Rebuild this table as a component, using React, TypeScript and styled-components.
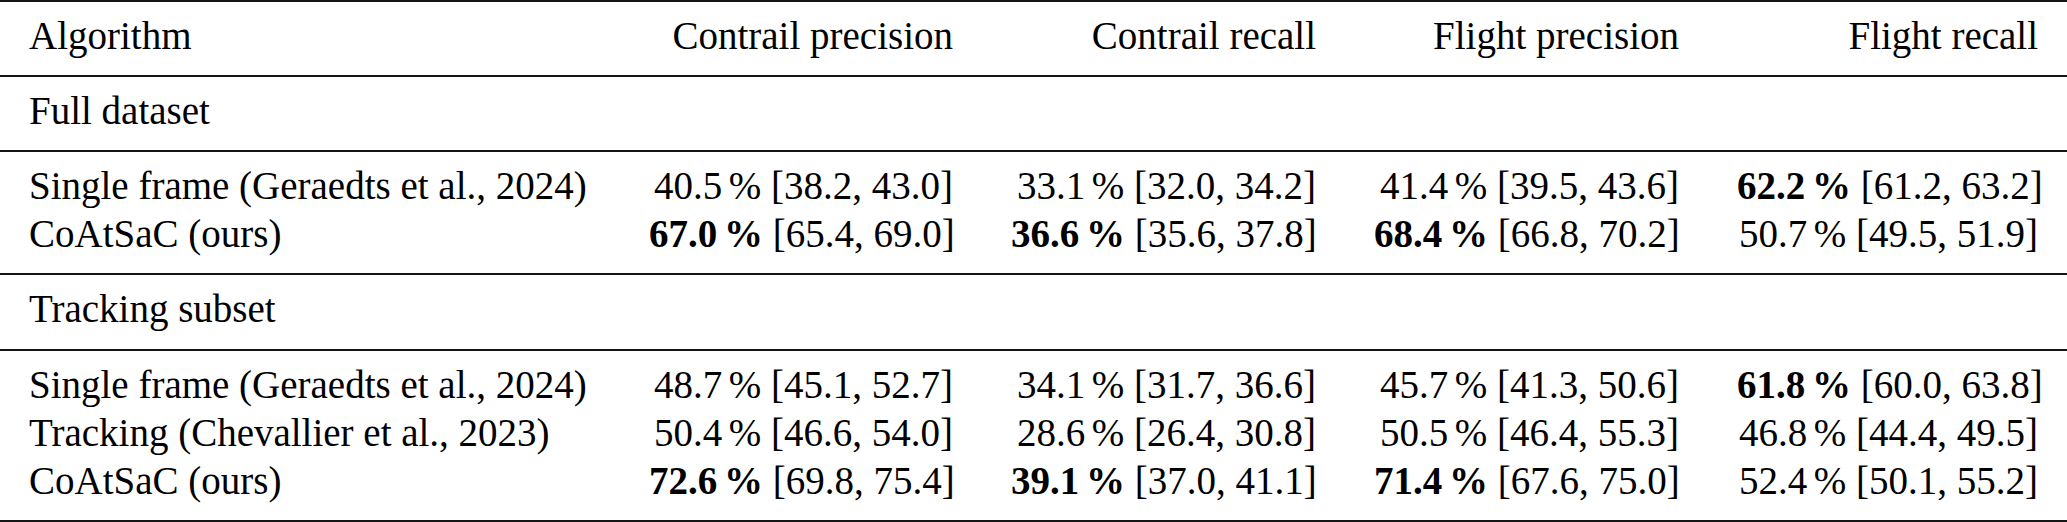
import React from 'react';
import styled, { createGlobalStyle } from 'styled-components';

const GlobalStyle = createGlobalStyle`
  html, body {
    margin: 0;
    padding: 0;
    background: #ffffff;
  }
  body {
    font-family: "Liberation Serif", "Times New Roman", serif;
    color: #000000;
  }
`;

const RULE = '2px solid #151515';

const Table = styled.table`
  width: 2067px;
  table-layout: fixed;
  border-collapse: separate;
  border-spacing: 0;
  font-family: "Liberation Serif", "Times New Roman", serif;
  font-size: 39px;
  line-height: 48px;
  color: #000;
`;

const HeadCell = styled.th<{ $align: 'left' | 'right' }>`
  font-weight: normal;
  text-align: ${(p) => p.$align};
  white-space: nowrap;
  padding: 10px 29px 15px;
  border-top: ${RULE};
`;

const SectionCell = styled.td<{ $padBottom: number }>`
  text-align: left;
  white-space: nowrap;
  padding: 10px 29px ${(p) => p.$padBottom}px;
  border-top: ${RULE};
`;

const DataCell = styled.td<{
  $align: 'left' | 'right';
  $first: boolean;
  $last: boolean;
  $end: boolean;
}>`
  text-align: ${(p) => p.$align};
  white-space: nowrap;
  padding: ${(p) => (p.$first ? '10px' : '0')} 29px ${(p) => (p.$last ? '15px' : '0')};
  border-top: ${(p) => (p.$first ? RULE : 'none')};
  border-bottom: ${(p) => (p.$end ? RULE : 'none')};
`;

const Best = styled.strong`
  font-weight: bold;
`;

const Pct = styled.span`
  margin-left: 0.17em;
`;

type Cell = [string, string, boolean];
type Row = { name: string; cells: Cell[] };
type Group = { label: string; labelPadBottom: number; rows: Row[] };

const headers = ['Contrail precision', 'Contrail recall', 'Flight precision', 'Flight recall'];

const groups: Group[] = [
  {
    label: 'Full dataset',
    labelPadBottom: 15,
    rows: [
      {
        name: 'Single frame (Geraedts et al., 2024)',
        cells: [
          ['40.5', '38.2, 43.0', false],
          ['33.1', '32.0, 34.2', false],
          ['41.4', '39.5, 43.6', false],
          ['62.2', '61.2, 63.2', true],
        ],
      },
      {
        name: 'CoAtSaC (ours)',
        cells: [
          ['67.0', '65.4, 69.0', true],
          ['36.6', '35.6, 37.8', true],
          ['68.4', '66.8, 70.2', true],
          ['50.7', '49.5, 51.9', false],
        ],
      },
    ],
  },
  {
    label: 'Tracking subset',
    labelPadBottom: 16,
    rows: [
      {
        name: 'Single frame (Geraedts et al., 2024)',
        cells: [
          ['48.7', '45.1, 52.7', false],
          ['34.1', '31.7, 36.6', false],
          ['45.7', '41.3, 50.6', false],
          ['61.8', '60.0, 63.8', true],
        ],
      },
      {
        name: 'Tracking (Chevallier et al., 2023)',
        cells: [
          ['50.4', '46.6, 54.0', false],
          ['28.6', '26.4, 30.8', false],
          ['50.5', '46.4, 55.3', false],
          ['46.8', '44.4, 49.5', false],
        ],
      },
      {
        name: 'CoAtSaC (ours)',
        cells: [
          ['72.6', '69.8, 75.4', true],
          ['39.1', '37.0, 41.1', true],
          ['71.4', '67.6, 75.0', true],
          ['52.4', '50.1, 55.2', false],
        ],
      },
    ],
  },
];

const colWidths = [620, 362, 363, 363, 359];

function Value({ cell }: { cell: Cell }) {
  const [v, ci, best] = cell;
  const main = (
    <>
      {v}
      <Pct>%</Pct>
    </>
  );
  return (
    <>
      {best ? <Best>{main}</Best> : main} [{ci}]
    </>
  );
}

export default function App() {
  return (
    <>
      <GlobalStyle />
      <Table>
        <colgroup>
          {colWidths.map((w, i) => (
            <col key={i} style={{ width: w }} />
          ))}
        </colgroup>
        <thead>
          <tr>
            <HeadCell $align="left">Algorithm</HeadCell>
            {headers.map((h) => (
              <HeadCell key={h} $align="right">
                {h}
              </HeadCell>
            ))}
          </tr>
        </thead>
        {groups.map((g, gi) => (
          <tbody key={g.label}>
            <tr>
              <SectionCell colSpan={5} $padBottom={g.labelPadBottom}>
                {g.label}
              </SectionCell>
            </tr>
            {g.rows.map((r, ri) => {
              const first = ri === 0;
              const last = ri === g.rows.length - 1;
              const end = last && gi === groups.length - 1;
              return (
                <tr key={r.name + ri}>
                  <DataCell $align="left" $first={first} $last={last} $end={end}>
                    {r.name}
                  </DataCell>
                  {r.cells.map((c, ci) => (
                    <DataCell key={ci} $align="right" $first={first} $last={last} $end={end}>
                      <Value cell={c} />
                    </DataCell>
                  ))}
                </tr>
              );
            })}
          </tbody>
        ))}
      </Table>
    </>
  );
}
